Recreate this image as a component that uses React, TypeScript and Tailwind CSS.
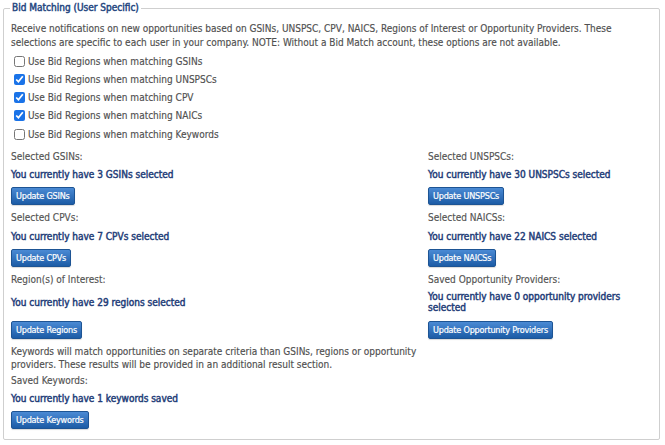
import React from 'react';

const font = { fontFamily: '"DejaVu Sans Condensed", "DejaVu Sans", sans-serif' };

const UpdateButton = ({ label }: { label: string }): React.JSX.Element => (
   <button
      type="button"
      className="h-[18px] px-[4px] text-[9px] tracking-[-0.2px] leading-[16px] text-white [-webkit-text-stroke:0.2px_#ffffff] rounded-[2px] border border-[#1d5494] bg-gradient-to-b from-[#4a8ad4] to-[#1c5ca6] shadow-[0_1px_1px_rgba(0,0,0,0.15)] whitespace-nowrap"
   >
      {label}
   </button>
);

const Check = ({ label, checked }: { label: string; checked?: boolean }): React.JSX.Element => (
   <label className="flex items-center h-[18.25px] pl-[3px]">
      <input
         type="checkbox"
         defaultChecked={checked}
         className="w-[11px] h-[11px] m-0 accent-[#1a73e8]"
      />
      <span className="ml-[3px]">{label}</span>
   </label>
);

const Label = ({ children }: { children: React.ReactNode }): React.JSX.Element => (
   <div className="text-[#555] leading-[14px] whitespace-nowrap">{children}</div>
);

const Value = ({ children }: { children: React.ReactNode }): React.JSX.Element => (
   <div className="text-[#1f3d78] leading-[11px] whitespace-nowrap [-webkit-text-stroke:0.45px_#1f3d78]">{children}</div>
);

export default function App(): React.JSX.Element {
   return (
      <div
         className="w-[665px] h-[445px] bg-white pl-[3px] pr-[5px] text-[10px] text-[#505050] [-webkit-text-stroke:0.15px_#505050]"
         style={font}
      >
         <fieldset className="border border-[#cfcfcf] rounded-[2px] px-[7px] pb-[9px] pt-0 h-[440px]">
            <legend className="px-[2px] ml-[-1px] text-[10px] text-[#24467f] leading-[16px] [-webkit-text-stroke:0.45px_#24467f]">
               Bid Matching (User Specific)
            </legend>

            <p className="mt-[6px] leading-[14px] whitespace-nowrap">
               Receive notifications on new opportunities based on GSINs, UNSPSC, CPV, NAICS, Regions of Interest or Opportunity Providers. These
               <br />
               selections are specific to each user in your company. NOTE: Without a Bid Match account, these options are not available.
            </p>

            <div className="mt-[2px] flex flex-col">
               <Check label="Use Bid Regions when matching GSINs" />
               <Check label="Use Bid Regions when matching UNSPSCs" checked />
               <Check label="Use Bid Regions when matching CPV" checked />
               <Check label="Use Bid Regions when matching NAICs" checked />
               <Check label="Use Bid Regions when matching Keywords" />
            </div>

            <div className="grid grid-cols-[417px_1fr] grid-rows-[15px_20px_24px_19px_18px_25px_19px_26px_29px_auto] mt-[6px] items-center">
               <Label>Selected GSINs:</Label>
               <Label>Selected UNSPSCs:</Label>
               <Value>You currently have 3 GSINs selected</Value>
               <Value>You currently have 30 UNSPSCs selected</Value>
               <div><UpdateButton label="Update GSINs" /></div>
               <div><UpdateButton label="Update UNSPSCs" /></div>

               <Label>Selected CPVs:</Label>
               <Label>Selected NAICSs:</Label>
               <Value>You currently have 7 CPVs selected</Value>
               <Value>You currently have 22 NAICS selected</Value>
               <div><UpdateButton label="Update CPVs" /></div>
               <div><UpdateButton label="Update NAICSs" /></div>

               <Label>Region(s) of Interest:</Label>
               <Label>Saved Opportunity Providers:</Label>
               <Value>You currently have 29 regions selected</Value>
               <Value>
                  You currently have 0 opportunity providers
                  <br />
                  selected
               </Value>
               <div><UpdateButton label="Update Regions" /></div>
               <div><UpdateButton label="Update Opportunity Providers" /></div>

               <div className="self-start">
                  <p className="leading-[13px] whitespace-nowrap mt-[1px]">
                     Keywords will match opportunities on separate criteria than GSINs, regions or opportunity
                     <br />
                     providers. These results will be provided in an additional result section.
                  </p>
                  <div className="mt-[3px]"><Label>Saved Keywords:</Label></div>
                  <div className="mt-[5px]"><Value>You currently have 1 keywords saved</Value></div>
                  <div className="mt-[7px]"><UpdateButton label="Update Keywords" /></div>
               </div>
               <div />
            </div>
         </fieldset>
      </div>
   );
}
